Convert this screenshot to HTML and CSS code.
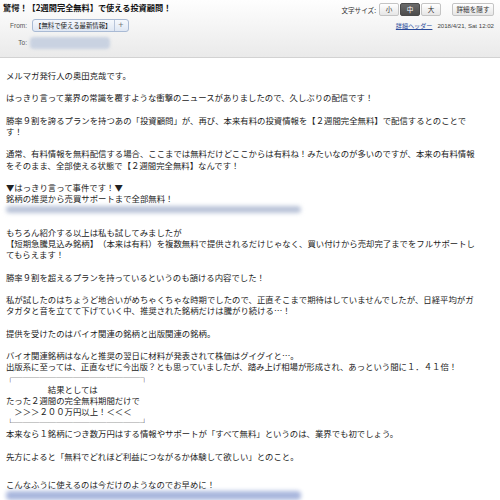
FILE: index.html
```html
<!DOCTYPE html>
<html lang="ja">
<head>
  <meta charset="UTF-8" />
  <title>驚愕！【2週間完全無料】で使える投資顧問！</title>
  <link rel="stylesheet" href="styles.css">
</head>
<body>

  <!-- ヘッダー -->
  <div class="mail-head">
    <div class="head-left">
      <div class="subject">驚愕！【2週間完全無料】で使える投資顧問！</div>
      <div class="addr-row">
        <span class="label">From:</span>
        <span class="pill">
          <span class="pill-name">【無料で使える最新情報】</span>
          <span class="pill-add">+</span>
        </span>
      </div>
      <div class="addr-row">
        <span class="label">To:</span>
        <span class="addr-blur"></span>
      </div>
    </div>

    <div class="head-right">
      <div class="tools">
        <span class="size-label">文字サイズ:</span>
        <button class="btn">小</button>
        <button class="btn active">中</button>
        <button class="btn">大</button>
        <button class="btn wide">詳細を隠す</button>
      </div>
      <div class="meta">
        <a href="#" class="detail-link">詳細ヘッダー</a>
        <span class="date">2018/4/21, Sat 12:02</span>
      </div>
    </div>
  </div>

  <!-- 本文 -->
  <div class="mail-body">
    <p>メルマガ発行人の奥田克哉です。</p>
    <p>はっきり言って業界の常識を覆すような衝撃のニュースがありましたので、久しぶりの配信です！</p>
    <p>勝率９割を誇るプランを持つあの「投資顧問」が、再び、本来有料の投資情報を【２週間完全無料】で配信するとのことです！</p>
    <p>通常、有料情報を無料配信する場合、ここまでは無料だけどここからは有料ね！みたいなのが多いのですが、本来の有料情報をそのまま、全部使える状態で【２週間完全無料】なんです！</p>
    <p class="tight">▼はっきり言って事件です！▼<br>銘柄の推奨から売買サポートまで全部無料！</p>
    <div class="link-blur"><span class="bar"></span></div>
    <p>もちろん紹介する以上は私も試してみましたが<br>【短期急騰見込み銘柄】（本来は有料）を複数無料で提供されるだけじゃなく、買い付けから売却完了までをフルサポートしてもらえます！</p>
    <p>勝率９割を超えるプランを持っているというのも頷ける内容でした！</p>
    <p>私が試したのはちょうど地合いがめちゃくちゃな時期でしたので、正直そこまで期待はしていませんでしたが、日経平均がガタガタと音を立てて下げていく中、推奨された銘柄だけは騰がり続ける…！</p>
    <p>提供を受けたのはバイオ関連の銘柄と出版関連の銘柄。</p>
    <p class="tight">バイオ関連銘柄はなんと推奨の翌日に材料が発表されて株価はグイグイと…。<br>出版系に至っては、正直なぜに今出版？とも思っていましたが、踏み上げ相場が形成され、あっという間に１．４１倍！</p>
    <p class="tight">┌───────────────┐<br>　　　　　結果としては<br>たった２週間の完全無料期間だけで<br>　＞＞＞２００万円以上！＜＜＜<br>└───────────────┘</p>
    <p>本来なら１銘柄につき数万円はする情報やサポートが「すべて無料」というのは、業界でも初でしょう。</p>
    <p class="loose">先方によると「無料でどれほど利益につながるか体験して欲しい」とのこと。</p>
    <p class="tight">こんなふうに使えるのは今だけのようなのでお早めに！</p>
    <div class="link-blur last"><span class="bar"></span></div>
  </div>

</body>
</html>
```

FILE: styles.css
```css
body {
  margin: 0;
  background: #fff;
  color: #222;
  font-family: "Noto Sans CJK JP", sans-serif;
  text-spacing-trim: space-all;
  overflow: hidden;
}

/* ヘッダー */
.mail-head {
  display: flex;
  justify-content: space-between;
  height: 58px;
  padding: 0 6px 0 3px;
  box-sizing: border-box;
  background: linear-gradient(#fefefe, #eaeaea);
  border-bottom: 1px solid #d2d2d2;
}

.subject {
  font-size: 8.2px;
  font-weight: bold;
  line-height: 14px;
  color: #111;
}

.addr-row {
  display: flex;
  align-items: center;
  height: 13px;
  margin-top: 5px;
}
.addr-row + .addr-row {
  margin-top: 4px;
}

.label {
  width: 24px;
  margin-right: 5px;
  text-align: right;
  font-family: "Liberation Sans", sans-serif;
  font-size: 6.5px;
  color: #555;
}

.pill {
  display: flex;
  height: 13px;
  box-sizing: border-box;
  border: 1px solid #a9bad4;
  border-radius: 3px;
  background: linear-gradient(#f5f8fd, #dfe7f3);
}
.pill-name {
  padding: 0 2px;
  font-size: 6.4px;
  line-height: 11px;
  color: #222;
}
.pill-add {
  width: 13px;
  border-left: 1px solid #b8c5da;
  text-align: center;
  font-family: "Liberation Sans", sans-serif;
  font-size: 9px;
  line-height: 11px;
  color: #777;
}

.addr-blur {
  width: 80px;
  height: 12px;
  margin-left: -2px;
  border-radius: 4px;
  background: #c9d2e1;
  filter: blur(1.5px);
}

.head-right {
  display: flex;
  flex-direction: column;
  align-items: flex-end;
}

.tools {
  display: flex;
  align-items: center;
  margin-top: 3px;
}
.size-label {
  margin-right: 3px;
  font-size: 6.6px;
  color: #333;
}

.btn {
  height: 13px;
  width: 20px;
  margin: 0 1px 0 0;
  padding: 0;
  border: 1px solid #c4c4c4;
  border-radius: 2px;
  background: linear-gradient(#ffffff, #e6e6e6);
  font-family: "Noto Sans CJK JP", sans-serif;
  font-size: 6.6px;
  line-height: 11px;
  color: #333;
}
.btn.active {
  border-color: #4a4a4a;
  background: linear-gradient(#6a6a6a, #4c4c4c);
  color: #fff;
}
.btn.wide {
  width: 42px;
  margin-left: 10px;
  margin-right: 0;
}

.meta {
  display: flex;
  align-items: center;
  margin-top: 5px;
}
.detail-link {
  font-size: 6.1px;
  color: #2a4b9b;
  text-decoration: underline;
  margin-right: 5px;
}
.date {
  font-family: "Liberation Sans", sans-serif;
  font-size: 6.1px;
  color: #444;
}

/* 本文 */
.mail-body {
  padding: 12px 20px 0 6px;
  font-size: 8.4px;
  line-height: 11.2px;
}
.mail-body p {
  margin: 0 0 11.2px;
}
.mail-body p.tight {
  margin-bottom: 0;
}
.mail-body p.loose {
  margin-bottom: 17px;
}

.link-blur {
  height: 11.2px;
  margin-bottom: 11.2px;
  display: flex;
  align-items: center;
}
.link-blur .bar {
  width: 295px;
  height: 7px;
  border-radius: 4px;
  background: #b9c3d8;
  filter: blur(2px);
}
.link-blur.last .bar {
  height: 9px;
  background: #a9b7dd;
}
```
